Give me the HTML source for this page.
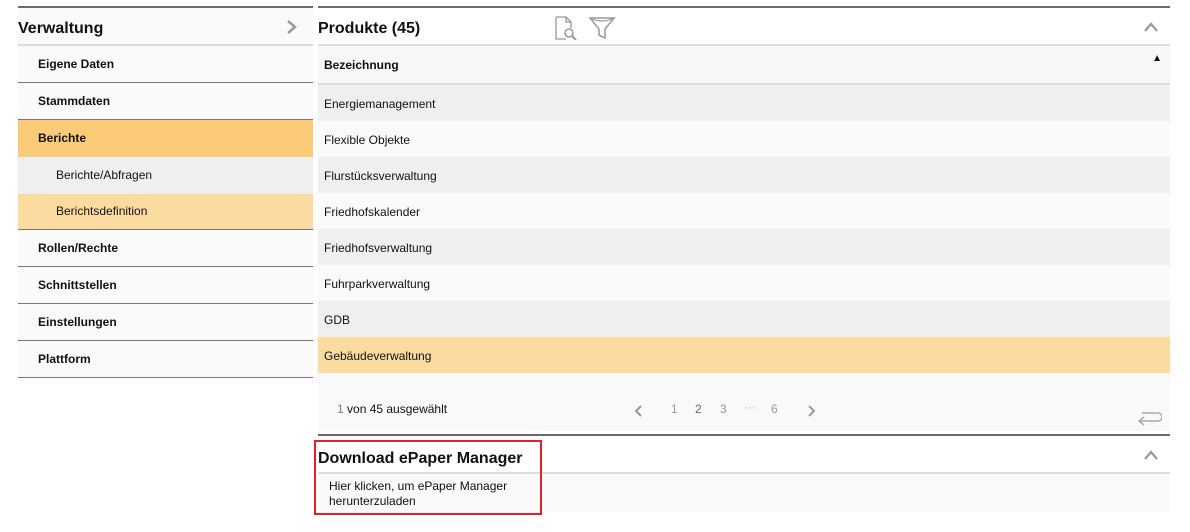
<!DOCTYPE html>
<html><head><meta charset="utf-8"><style>
*{margin:0;padding:0;box-sizing:border-box}
body{width:1190px;height:532px;background:#fff;font-family:"Liberation Sans",Arial,sans-serif;position:relative;overflow:hidden;color:#111}
.abs{position:absolute}
.left{left:18px;top:6px;width:295px}
.tb{border-top:2px solid #6b6b6b}
.hdr{height:38px;background:#fafafa;border-bottom:2px solid #dcdcdc;font-weight:bold;font-size:16px;line-height:38px;padding-top:2px;position:relative}
.it{height:37px;border-bottom:1px solid #777;font-size:12px;font-weight:bold;line-height:36px;padding-left:20px;background:#fafafa}
.sub{font-weight:normal;padding-left:38px;border-bottom:none}
.right{left:318px;top:6px;width:852px}
.row{height:36px;font-size:12px;line-height:38px;padding-left:6px}
</style></head><body>
<div class="abs left tb">
 <div class="hdr">Verwaltung<svg class="abs" style="left:268px;top:11px" width="12" height="16" viewBox="0 0 12 16"><path d="M2 2 L9 8 L2 14" fill="none" stroke="#999" stroke-width="2.5"/></svg></div>
 <div class="it">Eigene Daten</div>
 <div class="it">Stammdaten</div>
 <div class="it" style="background:#fbcb7a;border-bottom:none">Berichte</div>
 <div class="it sub" style="background:#efefef">Berichte/Abfragen</div>
 <div class="it sub" style="background:#fcdba0;border-bottom:1px solid #777;height:36px;line-height:35px">Berichtsdefinition</div>
 <div class="it">Rollen/Rechte</div>
 <div class="it">Schnittstellen</div>
 <div class="it">Einstellungen</div>
 <div class="it">Plattform</div>
</div>
<div class="abs right tb">
 <div class="hdr" style="background:#fff">Produkte (45)
  <svg class="abs" style="left:236px;top:8px" width="24" height="24" viewBox="0 0 24 24"><path d="M2 1 H12 L17 6 V12 M12 1 V6 H17 M2 1 V23 H12" fill="none" stroke="#999" stroke-width="1.3"/><circle cx="15" cy="17" r="4" fill="none" stroke="#999" stroke-width="1.5"/><path d="M18 20 L22 24" stroke="#999" stroke-width="2"/></svg>
  <svg class="abs" style="left:270px;top:8px" width="28" height="24" viewBox="0 0 28 24"><path d="M2 2 H26 L17 13 V22 L11 19 V13 Z" fill="none" stroke="#999" stroke-width="1.5"/><path d="M2 2 Q14 8 26 2" fill="none" stroke="#999" stroke-width="1.2"/></svg>
  <svg class="abs" style="left:826px;top:14px" width="14" height="10" viewBox="0 0 14 10"><path d="M1 9 L7 2 L13 9" fill="none" stroke="#999" stroke-width="2.2"/></svg>
 </div>
 <div class="row" style="height:39px;line-height:38px;background:#f7f7f7;font-weight:bold;border-bottom:2px solid #ddd;position:relative">Bezeichnung<span class="abs" style="right:8px;top:-6px;font-size:10px">▲</span></div>
 <div class="row" style="background:#efefef">Energiemanagement</div>
 <div class="row" style="background:#fafafa">Flexible Objekte</div>
 <div class="row" style="background:#efefef">Flurstücksverwaltung</div>
 <div class="row" style="background:#fafafa">Friedhofskalender</div>
 <div class="row" style="background:#efefef">Friedhofsverwaltung</div>
 <div class="row" style="background:#fafafa">Fuhrparkverwaltung</div>
 <div class="row" style="background:#efefef">GDB</div>
 <div class="row" style="background:#fcdba0">Gebäudeverwaltung</div>
 <div style="height:58px;background:#f9f9f9;position:relative;font-size:12px">
  <span class="abs" style="left:19px;top:29px"><span style="color:#6b7fa8">1</span> von 45 ausgewählt</span>
  <svg class="abs" style="left:316px;top:32px" width="10" height="12" viewBox="0 0 10 12"><path d="M7 1 L2 6 L7 11" fill="none" stroke="#999" stroke-width="2"/></svg>
  <span class="abs" style="left:353px;top:29px;color:#999">1</span>
  <span class="abs" style="left:377px;top:29px;color:#666">2</span>
  <span class="abs" style="left:402px;top:29px;color:#999">3</span>
  <span class="abs" style="left:426px;top:27px;color:#bbb">···</span>
  <span class="abs" style="left:453px;top:29px;color:#999">6</span>
  <svg class="abs" style="left:488px;top:32px" width="10" height="12" viewBox="0 0 10 12"><path d="M3 1 L8 6 L3 11" fill="none" stroke="#999" stroke-width="2"/></svg>
  <svg class="abs" style="left:818px;top:34px" width="26" height="20" viewBox="0 0 26 20"><path d="M6 6 H22 A3 3 0 0 1 22 14 H3 M8 10 L3 14 L8 18" fill="none" stroke="#aaa" stroke-width="1.5"/></svg>
 </div>
</div>
<div class="abs" style="left:318px;top:434px;width:852px;border-top:2px solid #6b6b6b">
 <div class="hdr" style="background:#fff;padding-top:4px">Download ePaper Manager
  <svg class="abs" style="left:826px;top:14px" width="14" height="10" viewBox="0 0 14 10"><path d="M1 9 L7 2 L13 9" fill="none" stroke="#999" stroke-width="2.2"/></svg></div>
 <div style="height:37px;background:#fafafa;font-size:12px;line-height:15px;padding:5px 0 0 11px">Hier klicken, um ePaper Manager<br>herunterzuladen</div>
</div>
<div class="abs" style="left:314px;top:440px;width:228px;height:75px;border:2px solid #e0202a"></div>
</body></html>
